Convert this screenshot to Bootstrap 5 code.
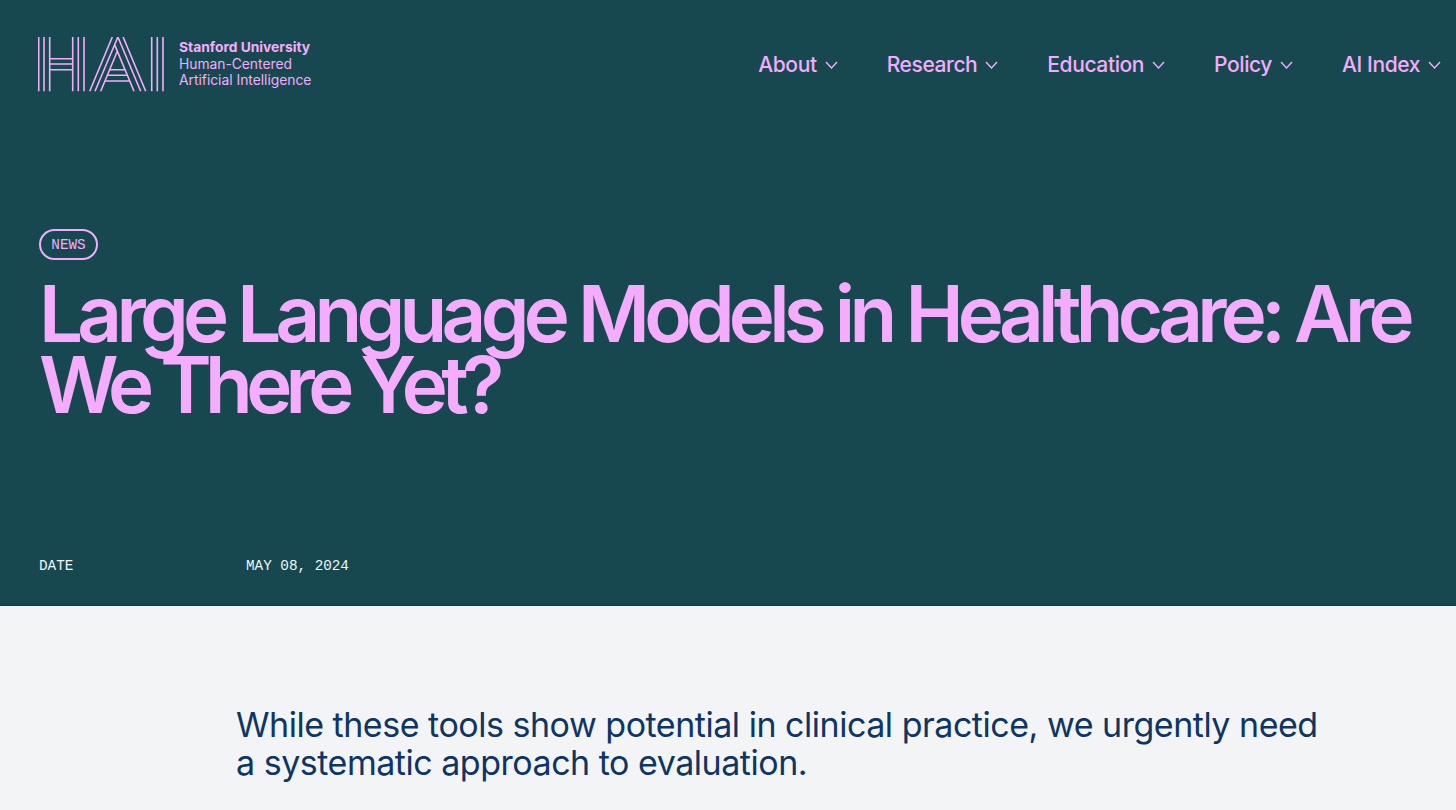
<!DOCTYPE html>
<html lang="en">
<head>
    <meta charset="UTF-8">
    <meta name="viewport" content="width=device-width, initial-scale=1.0">
    <title>Large Language Models in Healthcare</title>
    <link href="https://cdn.jsdelivr.net/npm/bootstrap@5.3.3/dist/css/bootstrap.min.css" rel="stylesheet">
    <style>
        html, body { height: 810px; overflow: hidden; }
        body { background: #f3f4f6; font-family: "Inter", "Liberation Sans", sans-serif; }
        .hero { background: #174850; height: 606px; padding: 37px 0 0 38px; color: #f5acfc; border-bottom: 1px solid #0f3a40; }
        .logo-mark { width: 127px; height: 55px; display: block; }
        .logo-text { font-size: 13.8px; line-height: 16.5px; margin-left: 14px; margin-top: 2px; white-space: nowrap; }
        .logo-text b { font-weight: 700; }
        .top-nav { gap: 49px; margin-top: 14px; margin-right: 15px; }
        .top-nav a { color: #f5acfc; font-size: 21px; font-weight: 500; line-height: 28px; letter-spacing: -.4px; text-decoration: none; display: flex; align-items: center; gap: 8px; }
        .tag-pill { display: block; margin-top: 137px; margin-left: 1px; border: 2px solid #f5acfc; border-radius: 16px; height: 31px; width: 59px; text-align: center; line-height: 28px; font-family: "Liberation Mono", monospace; font-size: 14.3px; }
        .hero-title { font-size: 78px; line-height: 71px; font-weight: 600; letter-spacing: -5.75px; margin: 18px 0 0 1px; color: #f5acfc; white-space: nowrap; }
        .title-tight { letter-spacing: -6.7px; }
        .meta-row { font-family: "Liberation Mono", monospace; font-size: 14.3px; line-height: 18px; color: #f0f5f5; margin-top: 137px; margin-left: 1px; }
        .meta-row span:first-child { width: 207px; }
        .intro { color: #0f3564; font-size: 34px; line-height: 38px; letter-spacing: -.48px; margin: 100px 0 0 236px; width: 1150px; }
    </style>
</head>
<body>
    <!-- Hero -->
    <header class="hero">
        <div class="d-flex justify-content-between align-items-start">
            <div class="d-flex align-items-start">
                <svg class="logo-mark" viewBox="0 0 127 55" fill="none" stroke="#f5acfc" stroke-width="1.6">
                    <path d="M.7 0V54.300M6 0V54.300M11.700 0V54.300M34.700 0V54.300M40.300 0V54.300M46 0V54.300M11.700 21.700H34.700M11.700 27H34.700M11.700 32.700H34.700"/>
                    <path d="M51.700 54.300L74.300 0M57 54.300L79.900 0M62.700 54.300L79.300 14.300M107.700 54.300L85.100 0M102.700 54.300L79.900 0M96 54.300L76.500 7.400"/>
                    <path d="M71.700 32.700H87M69.400 38.300H89.300M67 44H91.700"/>
                    <path d="M113.700 0V54.300M119.300 0V54.300M125 0V54.300"/>
                </svg>
                <div class="logo-text"><b>Stanford University</b><br>Human-Centered<br>Artificial Intelligence</div>
            </div>
            <nav class="top-nav d-flex">
                <a href="#">About <svg width="13" height="8" viewBox="0 0 13 8" fill="none" stroke="#f5acfc" stroke-width="1.4"><path d="M1 1L6.500 7L12 1"/></svg></a>
                <a href="#">Research <svg width="13" height="8" viewBox="0 0 13 8" fill="none" stroke="#f5acfc" stroke-width="1.4"><path d="M1 1L6.500 7L12 1"/></svg></a>
                <a href="#">Education <svg width="13" height="8" viewBox="0 0 13 8" fill="none" stroke="#f5acfc" stroke-width="1.4"><path d="M1 1L6.500 7L12 1"/></svg></a>
                <a href="#">Policy <svg width="13" height="8" viewBox="0 0 13 8" fill="none" stroke="#f5acfc" stroke-width="1.4"><path d="M1 1L6.500 7L12 1"/></svg></a>
                <a href="#">AI Index <svg width="13" height="8" viewBox="0 0 13 8" fill="none" stroke="#f5acfc" stroke-width="1.4"><path d="M1 1L6.500 7L12 1"/></svg></a>
            </nav>
        </div>
        <span class="tag-pill">NEWS</span>
        <h1 class="hero-title">Large Language Models in Healthcare: Are<br><span class="title-tight">We There Yet?</span></h1>
        <div class="meta-row d-flex">
            <span>DATE</span>
            <span>MAY 08, 2024</span>
        </div>
    </header>

    <!-- Intro -->
    <p class="intro">While these tools show potential in clinical practice, we urgently need<br>a systematic approach to evaluation.</p>

    <script src="https://cdn.jsdelivr.net/npm/bootstrap@5.3.3/dist/js/bootstrap.bundle.min.js"></script>
</body>
</html>
